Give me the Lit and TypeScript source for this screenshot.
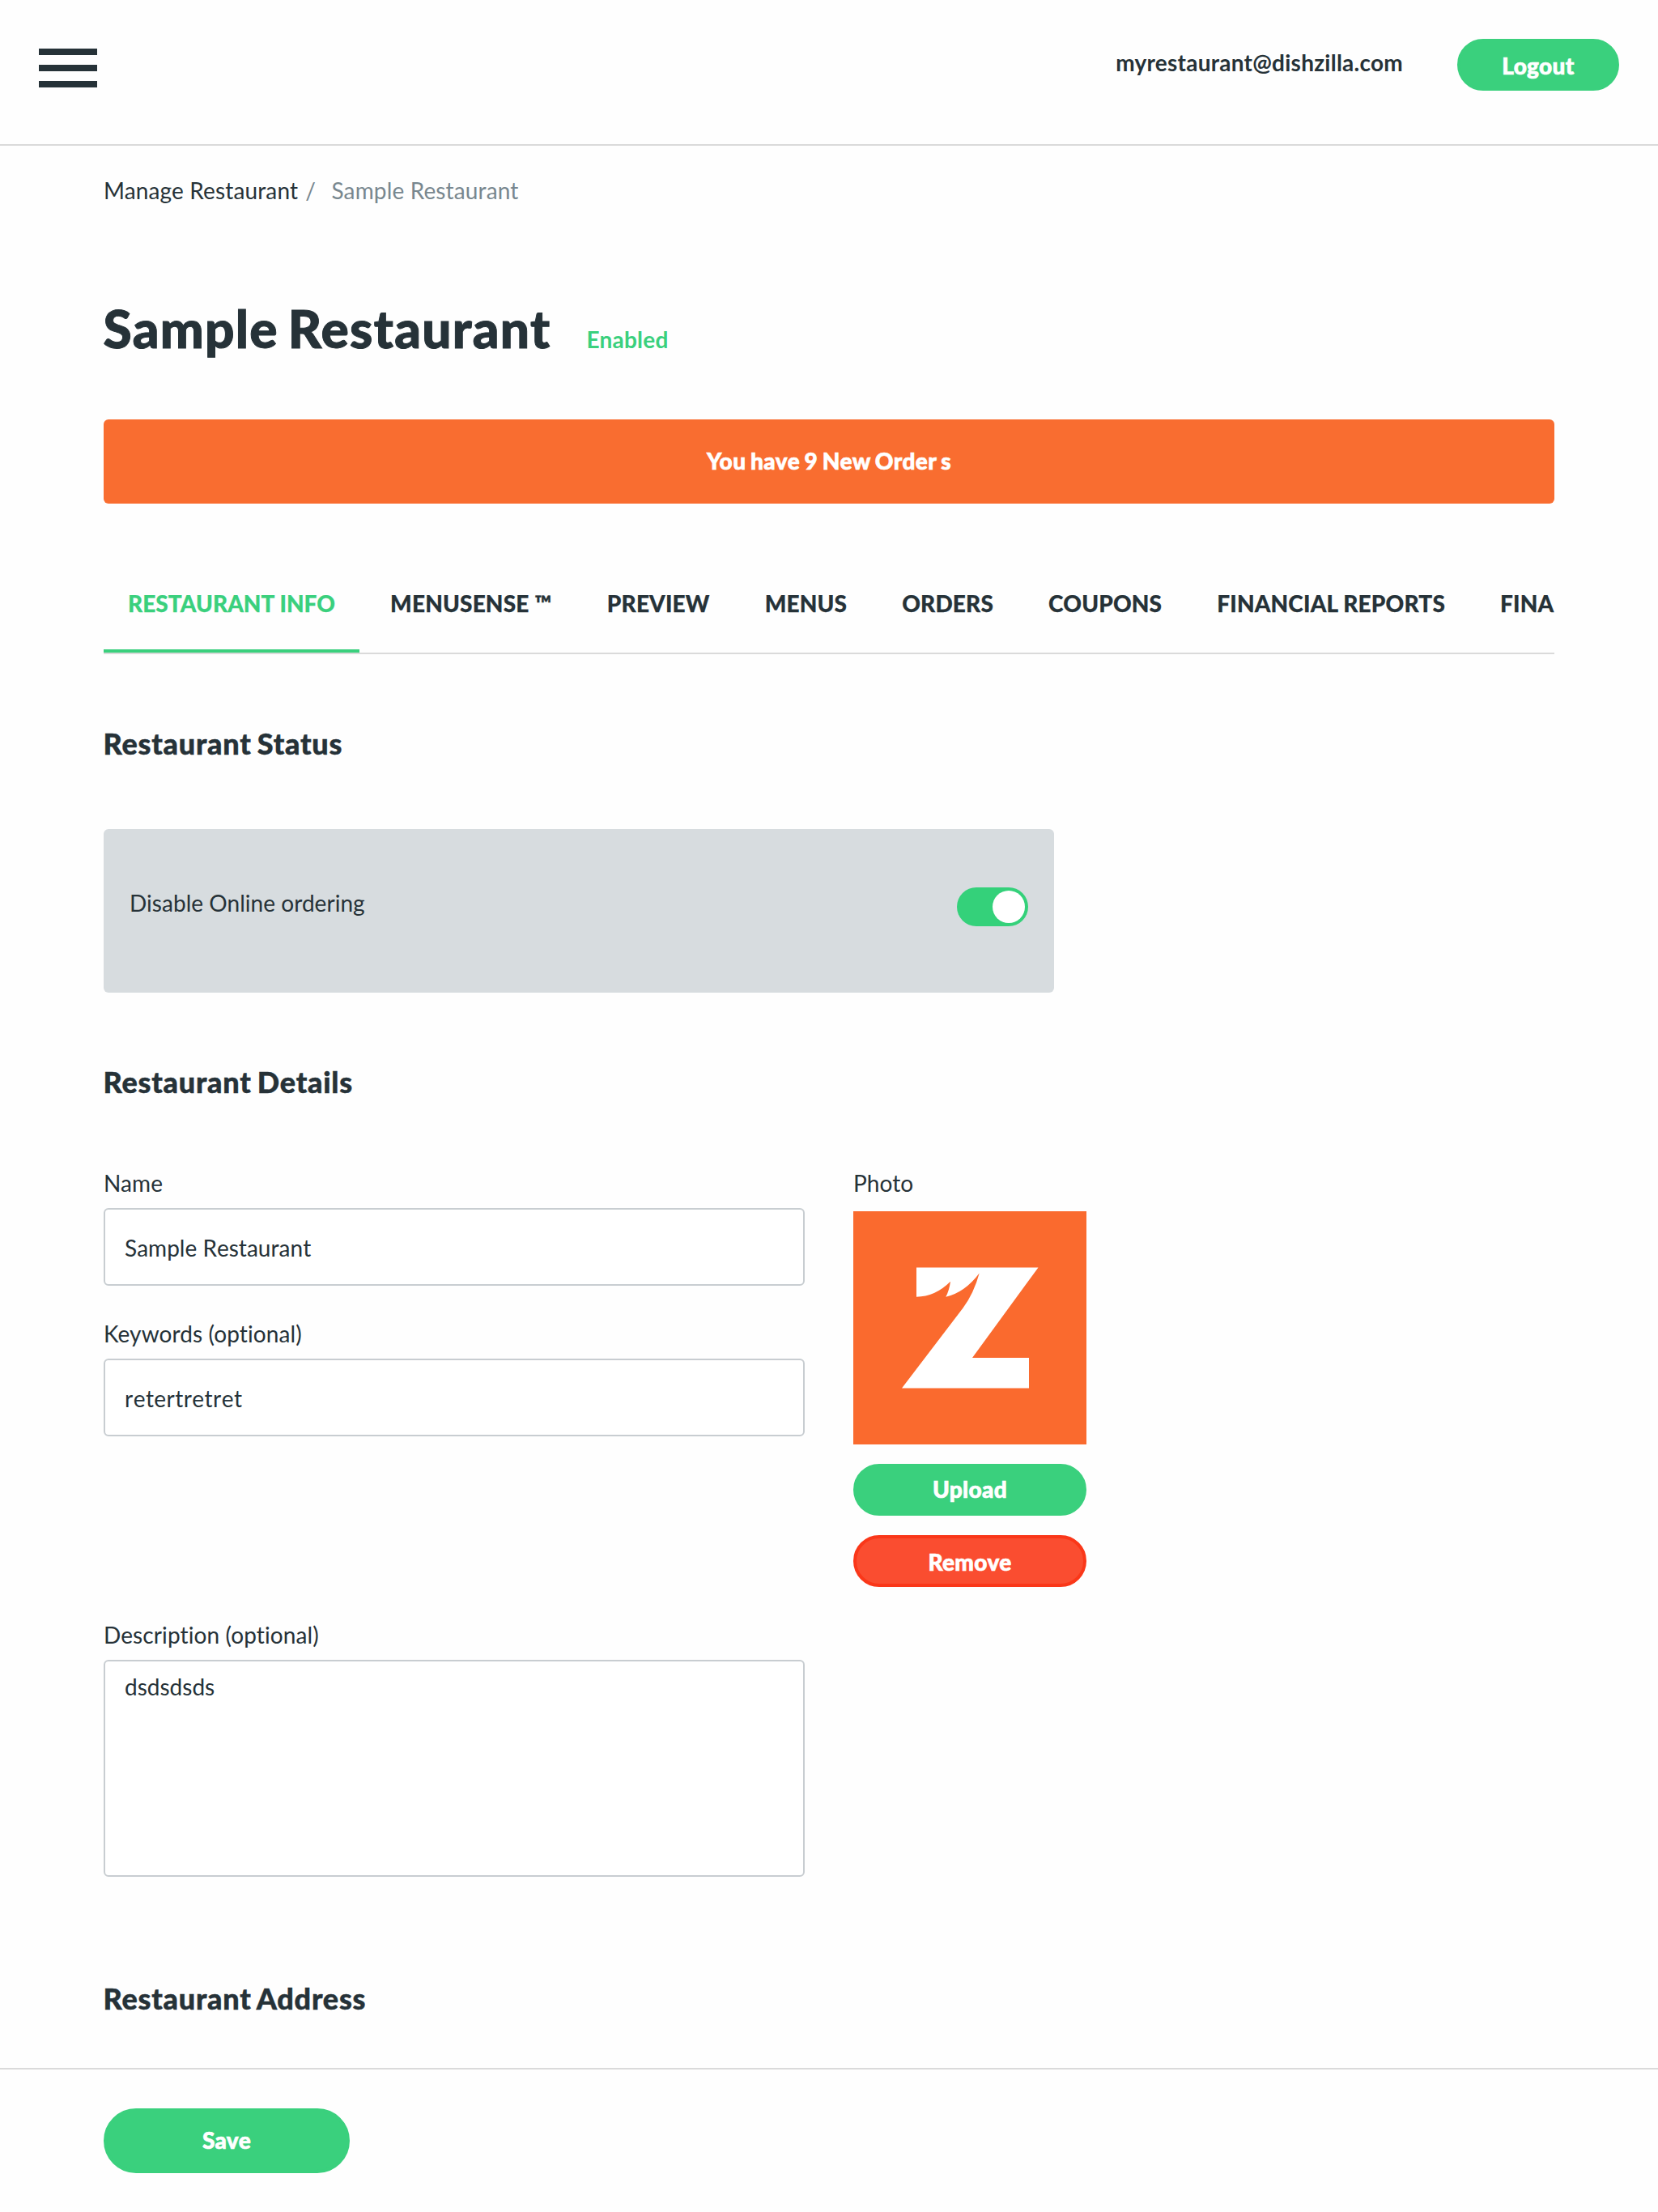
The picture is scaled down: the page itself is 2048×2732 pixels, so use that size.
import { LitElement, html, css } from "lit";
import { customElement, property } from "lit/decorators.js";

const TABS = [
  "Restaurant Info",
  "MenuSense ™",
  "Preview",
  "Menus",
  "Orders",
  "Coupons",
  "Financial Reports",
  "Fina",
];

@customElement("pill-button")
class PillButton extends LitElement {
  @property({ reflect: true }) variant = "primary";

  static styles = css`
    :host {
      display: block;
      height: 64px;
    }
    .pill {
      box-sizing: border-box;
      display: flex;
      align-items: center;
      justify-content: center;
      width: 100%;
      height: 100%;
      margin: 0;
      padding: 0 0 2px;
      border: 4px solid #3ad07d;
      border-radius: 40px;
      background: #3ad07d;
      color: #fff;
      font: 900 28px/34px Lato, sans-serif;
      letter-spacing: 0.35px;
      -webkit-text-stroke: 0.7px currentColor;
    }
    :host([variant="danger"]) .pill {
      border-color: #fa3719;
      background: #fa4d30;
    }
  `;

  render() {
    return html`<button class="pill"><slot></slot></button>`;
  }
}

@customElement("text-field")
class TextField extends LitElement {
  @property() label = "";
  @property() value = "";
  @property({ type: Boolean }) multiline = false;

  static styles = css`
    :host {
      display: block;
    }
    .label {
      display: block;
      height: 34px;
      margin-bottom: 14px;
      line-height: 34px;
      letter-spacing: 0.1px;
    }
    .control {
      box-sizing: border-box;
      display: block;
      width: 866px;
      height: 96px;
      margin: 0;
      padding: 2px 24px 0;
      border: 2px solid #c8cdd1;
      border-radius: 6px;
      outline: none;
      background: #fff;
      color: #263238;
      font: 400 28px/34px Lato, sans-serif;
      font-kerning: none;
      letter-spacing: var(--value-tracking, normal);
      resize: none;
    }
    .area {
      height: 268px;
      padding-top: 14px;
    }
  `;

  render() {
    return html`
      <label class="label">${this.label}</label>
      ${this.multiline
        ? html`<textarea class="control area" .value=${this.value}></textarea>`
        : html`<input class="control" .value=${this.value} />`}
    `;
  }
}

@customElement("app-root")
class AppRoot extends LitElement {
  static styles = css`
    :host {
      box-sizing: border-box;
      display: flex;
      flex-direction: column;
      height: 2732px;
      overflow: hidden;
      background: #fefefe;
      color: #263238;
      font: 400 28px/34px Lato, sans-serif;
    }
    .header {
      box-sizing: border-box;
      display: flex;
      align-items: flex-start;
      flex: none;
      height: 180px;
      padding: 48px 48px 0;
      border-bottom: 2px solid #dadada;
    }
    .burger {
      display: flex;
      flex-direction: column;
      gap: 12px;
      margin-top: 12px;
    }
    .bar {
      width: 72px;
      height: 8px;
      background: #263238;
    }
    .email {
      margin: 12px 67px 0 auto;
      font-weight: 700;
      letter-spacing: 0.25px;
    }
    .logout {
      width: 200px;
    }
    .logout-label,
    .remove-label {
      padding-top: 4px;
    }
    .main {
      flex: 1;
      min-height: 0;
      overflow: hidden;
      padding: 38px 128px 0;
    }
    .crumbs {
      display: flex;
      letter-spacing: 0.14px;
    }
    .crumb-sep {
      margin: 0 19.5px 0 9px;
      color: #78878f;
    }
    .crumb-current {
      color: #78878f;
    }
    .title-row {
      display: flex;
      align-items: baseline;
      margin-top: 116px;
    }
    .title {
      margin: 0 44px 0 -0.5px;
      font: 900 64px/76px Lato, sans-serif;
      letter-spacing: 1.28px;
      word-spacing: -4.5px;
      -webkit-text-stroke: 1px currentColor;
    }
    .state {
      color: #3ad07d;
      font-weight: 700;
      letter-spacing: 0.25px;
    }
    .banner {
      box-sizing: border-box;
      display: flex;
      align-items: center;
      justify-content: center;
      height: 104px;
      margin-top: 74px;
      padding-bottom: 2px;
      border-radius: 6px;
      background: #f96d30;
      color: #fff;
      font-weight: 900;
      letter-spacing: 0.45px;
      word-spacing: -1.6px;
      -webkit-text-stroke: 0.7px currentColor;
    }
    .tabs {
      box-sizing: border-box;
      display: flex;
      gap: 8px;
      height: 114px;
      margin: 72px 0 88px;
      border-bottom: 2px solid #dadada;
      overflow: hidden;
    }
    .tab {
      box-sizing: border-box;
      flex: none;
      height: 112px;
      padding: 34px 30px 0;
      font-weight: 900;
      letter-spacing: 0.17px;
      text-transform: uppercase;
      white-space: nowrap;
      -webkit-text-stroke: 0.25px currentColor;
    }
    .tab.active {
      border-bottom: 4px solid #3ad07d;
      color: #3ad07d;
      letter-spacing: 0.05px;
    }
    .section {
      margin: 0 0 0 -0.5px;
      font: 900 36px/44px Lato, sans-serif;
      letter-spacing: 0.77px;
      word-spacing: -2px;
      -webkit-text-stroke: 0.5px currentColor;
    }
    .status {
      box-sizing: border-box;
      display: flex;
      justify-content: space-between;
      width: 1174px;
      height: 202px;
      margin: 84px 0 88px;
      padding: 72px 32px 0;
      border-radius: 6px;
      background: #d7dcdf;
    }
    .status-label {
      margin-top: 2px;
      letter-spacing: 0.04px;
    }
    .toggle {
      box-sizing: border-box;
      display: flex;
      justify-content: flex-end;
      width: 88px;
      height: 48px;
      padding: 4px;
      border-radius: 24px;
      background: #34d17a;
    }
    .knob {
      width: 40px;
      height: 40px;
      border-radius: 50%;
      background: #fff;
    }
    .details {
      display: flex;
      gap: 60px;
      height: 558px;
      margin-top: 86px;
    }
    .fields {
      display: flex;
      flex-direction: column;
      gap: 42px;
    }
    .keywords {
      --value-tracking: 0.45px;
    }
    .photo {
      display: flex;
      flex-direction: column;
      gap: 24px;
      width: 288px;
    }
    .photo-label {
      margin-bottom: -10px;
      padding-bottom: 4px;
      letter-spacing: 0.1px;
    }
    .logo {
      display: block;
      width: 288px;
      height: 288px;
    }
    .address {
      margin-top: 128px;
    }
    .footer {
      box-sizing: border-box;
      flex: none;
      height: 178px;
      padding: 48px 128px 0;
      border-top: 2px solid #dadada;
    }
    .save {
      width: 304px;
      height: 80px;
    }
  `;

  render() {
    return html`
      <header class="header">
        <div class="burger">
          <div class="bar"></div>
          <div class="bar"></div>
          <div class="bar"></div>
        </div>
        <div class="email">myrestaurant@dishzilla.com</div>
        <pill-button class="logout"><span class="logout-label">Logout</span></pill-button>
      </header>
      <main class="main">
        <nav class="crumbs">
          <span>Manage Restaurant</span>
          <span class="crumb-sep">/</span>
          <span class="crumb-current">Sample Restaurant</span>
        </nav>
        <div class="title-row">
          <h1 class="title">Sample Restaurant</h1>
          <span class="state">Enabled</span>
        </div>
        <div class="banner">You have 9 New Order s</div>
        <nav class="tabs">
          ${TABS.map((t, i) => html`<a class="tab ${i === 0 ? "active" : ""}">${t}</a>`)}
        </nav>
        <h2 class="section">Restaurant Status</h2>
        <div class="status">
          <span class="status-label">Disable Online ordering</span>
          <div class="toggle"><div class="knob"></div></div>
        </div>
        <h2 class="section">Restaurant Details</h2>
        <div class="details">
          <div class="fields">
            <text-field label="Name" value="Sample Restaurant"></text-field>
            <text-field
              class="keywords"
              label="Keywords (optional)"
              value="retertretret"
            ></text-field>
          </div>
          <div class="photo">
            <span class="photo-label">Photo</span>
            <svg class="logo" viewBox="0 0 288 288">
              <rect width="288" height="288" fill="#fa6a2e" />
              <path
                fill="#fff"
                d="M78 69.5H228.5L147 181H217V218.5H60L135.5 119.5Q149 101 155.7 76.4Q138 100 114.3 105.7Q118.5 98 120 86.8Q101 105.7 78 105.7Z"
              />
            </svg>
            <pill-button>Upload</pill-button>
            <pill-button variant="danger"><span class="remove-label">Remove</span></pill-button>
          </div>
        </div>
        <text-field label="Description (optional)" value="dsdsdsds" multiline></text-field>
        <h2 class="section address">Restaurant Address</h2>
      </main>
      <footer class="footer">
        <pill-button class="save">Save</pill-button>
      </footer>
    `;
  }
}
